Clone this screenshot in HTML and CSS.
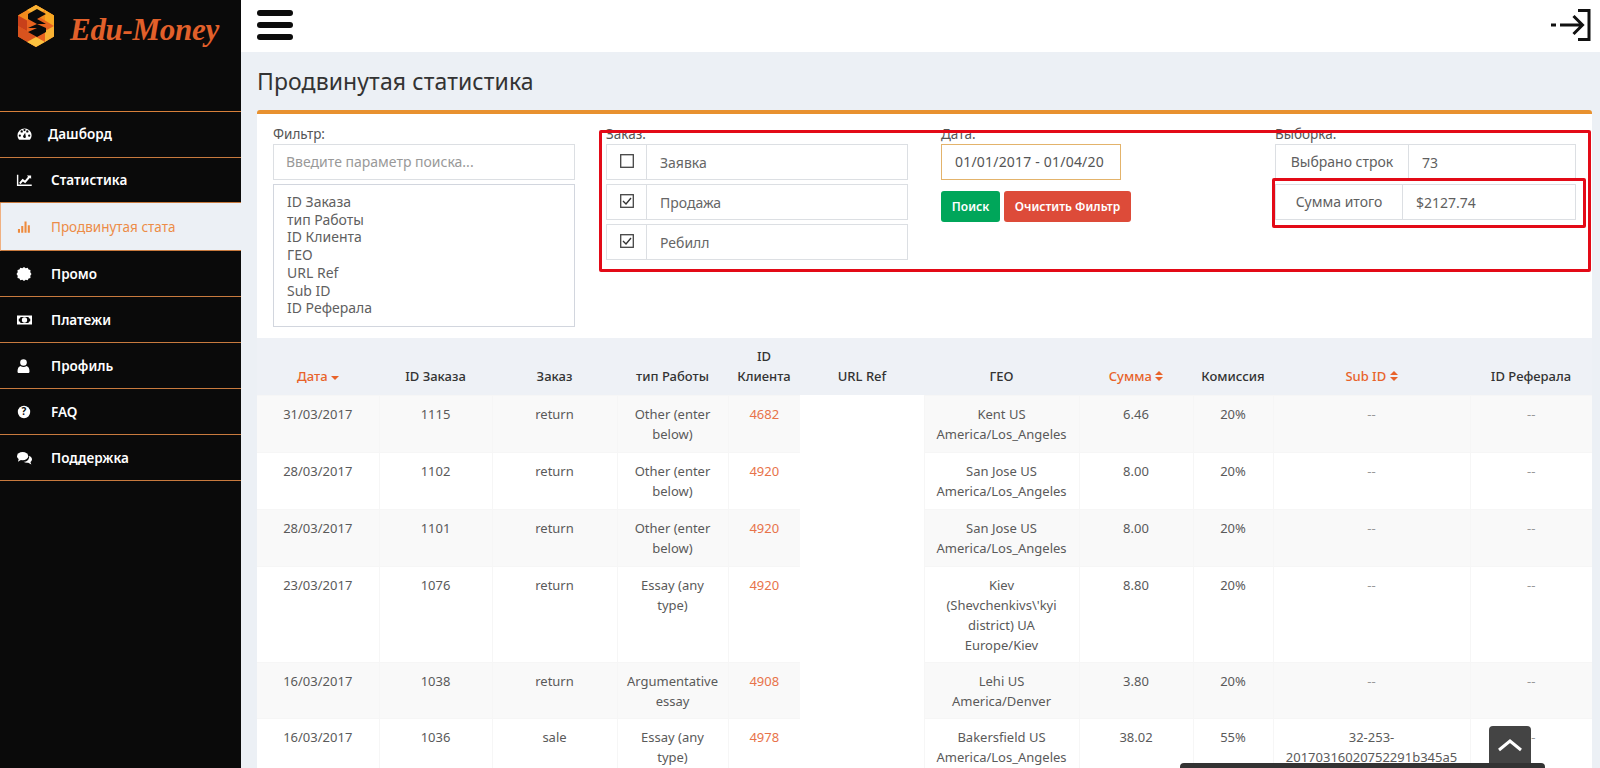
FILE: index.html
```html
<!DOCTYPE html>
<html lang="ru">
<head>
<meta charset="utf-8">
<title>Продвинутая статистика</title>
<link rel="stylesheet" href="styles.css">
</head>
<body>
<aside class="sidebar">
  <div class="logo">
    <svg class="logo-mark" viewBox="0 0 38 44" width="38" height="44">
      <polygon points="19,1 37,11.500 37,32.500 19,43 1,32.500 1,11.500" fill="#e8631f"/>
      <polygon points="19,1 37,11.500 28,16.500 19,11 10,16.500 1,11.500" fill="#f08a1d"/>
      <polygon points="19,1 28,6 19,11 10,6" fill="#f9b233"/>
      <polygon points="28,6 37,11.500 37,22 28,16.500" fill="#f7a823"/>
      <polygon points="1,11.500 10,16.500 10,27 1,22" fill="#c8401a"/>
      <polygon points="37,22 37,32.500 28,38 28,27" fill="#f9b233"/>
      <polygon points="1,22 10,27 19,33 19,43 1,32.500" fill="#d9531e"/>
      <polygon points="19,33 28,38 19,43 10,38" fill="#fbc13f"/>
      <polygon points="11,10 20,5 29,10 20,15 29,20 20,20 11,15" fill="#0a0a0a"/>
      <polygon points="11,24 20,20 29,24 29,28 20,33 11,28 20,24" fill="#0a0a0a"/>
    </svg>
    <span class="logo-text">Edu-Money</span>
  </div>
  <nav class="nav">
    <a class="nav-item tight">
      <svg class="ico" viewBox="0 0 16 14"><path d="M8 1a7.500 7.500 0 0 0-7.500 7.500c0 1.600.5 3 1.300 4.200.2.200.4.300.7.300h11c.3 0 .5-.1.7-.3A7.500 7.500 0 0 0 8 1zm-5 9a1.200 1.200 0 1 1 0-2.400 1.200 1.200 0 0 1 0 2.400zm2-4.500A1.200 1.200 0 1 1 5 3a1.200 1.200 0 0 1 0 2.500zM8 4a1.200 1.200 0 1 1 0-2.400A1.200 1.200 0 0 1 8 4zm1.500 6.500a1.700 1.700 0 0 1-3-1.500l2.200-3.300.8 4.800zM11 5.500A1.200 1.200 0 1 1 11 3a1.200 1.200 0 0 1 0 2.500zM13 10a1.200 1.200 0 1 1 0-2.400 1.200 1.200 0 0 1 0 2.400z" fill="#fff" fill-rule="evenodd"/></svg>
      Дашборд
    </a>
    <a class="nav-item short">
      <svg class="ico" viewBox="0 0 17 14"><path d="M.7 1v12h16" fill="none" stroke="#fff" stroke-width="1.600"/><path d="M2.500 10l3.800-4.500 2.700 2 3.500-4.200-1.300-1.300H16v3.800l-1.300-1.300-5.400 6.300L6.700 8.800l-2.800 3z" fill="#fff"/></svg>
      Статистика
    </a>
    <a class="nav-item active">
      <svg class="ico" viewBox="0 0 16 14"><path d="M1 9h2.200v4H1zM4.500 6h2.200v7H4.500zM8 1h2.200v12H8zM11.500 5h2.200v8h-2.200z" fill="#ee8a3c"/></svg>
      Продвинутая стата
    </a>
    <a class="nav-item">
      <svg class="ico" viewBox="0 0 14 14"><path d="M6.500 0l1.700 1.300 2-.6.9 1.900 1.900.5-.2 2.100L14 7l-1.200 1.800.2 2.100-1.900.5-.9 1.900-2-.6L6.500 14l-1.700-1.300-2 .6-.9-1.900-1.900-.5.2-2.100L-1 7 .2 5.200 0 3.100l1.900-.5.9-1.900 2 .6z" fill="#fff"/></svg>
      Промо
    </a>
    <a class="nav-item">
      <svg class="ico" viewBox="0 0 17 12"><path fill-rule="evenodd" d="M0 1h17v10H0zM2 4.500v3A2 2 0 0 1 4 9.500h9a2 2 0 0 1 2-2v-3a2 2 0 0 1-2-2H4a2 2 0 0 1-2 2zM8.500 3a3 3 0 1 0 0 6 3 3 0 0 0 0-6z" fill="#fff"/></svg>
      Платежи
    </a>
    <a class="nav-item">
      <svg class="ico" viewBox="0 0 14 14"><circle cx="6" cy="3.500" r="3.300" fill="#fff"/><path d="M0 12.500c0-3 1-5 3-5.500 1.800 1.300 4.200 1.300 6 0 2 .5 3 2.500 3 5.500 0 1-.7 1.500-1.500 1.500h-9C.7 14 0 13.500 0 12.500z" fill="#fff"/></svg>
      Профиль
    </a>
    <a class="nav-item">
      <svg class="ico" viewBox="0 0 14 14"><circle cx="6.500" cy="7" r="6.200" fill="#fff"/><text x="6.500" y="10.300" class="ico-q">?</text></svg>
      FAQ
    </a>
    <a class="nav-item">
      <svg class="ico" viewBox="0 0 16 14"><ellipse cx="6" cy="5" rx="6" ry="4.300" fill="#fff"/><path d="M2 7.500L1 11l4-2.500z" fill="#fff"/><path d="M13 4.500c1.800.8 3 2.200 3 3.800 0 1.200-.7 2.200-1.700 3l1 2.500-3.300-1.800c-2 .3-3.800-.1-5-1 3.500 0 6.300-2.300 6-6.500z" fill="#fff"/></svg>
      Поддержка
    </a>
  </nav>
</aside>

<main class="main">
  <header class="topbar">
    <div class="burger"><span></span><span></span><span></span></div>
    <svg class="logout" viewBox="0 0 40 32" width="40" height="32">
      <path d="M0 16h5" stroke="#111" stroke-width="3" fill="none"/>
      <path d="M9 16h22M22.500 7l9 9-9 9" stroke="#111" stroke-width="3" fill="none"/>
      <path d="M27 1.500h11v29H27" stroke="#111" stroke-width="3" fill="none"/>
    </svg>
  </header>

  <h1 class="title">Продвинутая статистика</h1>

  <section class="panel">
    <div class="col">
      <label class="lbl">Фильтр:</label>
      <div class="field placeholder">Введите параметр поиска...</div>
      <ul class="list">
        <li>ID Заказа</li><li>тип Работы</li><li>ID Клиента</li><li>ГЕО</li><li>URL Ref</li><li>Sub ID</li><li>ID Реферала</li>
      </ul>
    </div>
    <div class="col">
      <label class="lbl">Заказ:</label>
      <div class="group">
        <span class="addon"><svg class="check" viewBox="0 0 14 14"><rect x=".7" y=".7" width="12.600" height="12.600" fill="#fff" stroke="#444" stroke-width="1.300"/></svg></span>
        <span class="group-text">Заявка</span>
      </div>
      <div class="group">
        <span class="addon"><svg class="check" viewBox="0 0 14 14"><rect x=".7" y=".7" width="12.600" height="12.600" fill="#fff" stroke="#444" stroke-width="1.300"/><path d="M3 7l3 3 5-6" fill="none" stroke="#333" stroke-width="1.400"/></svg></span>
        <span class="group-text">Продажа</span>
      </div>
      <div class="group">
        <span class="addon"><svg class="check" viewBox="0 0 14 14"><rect x=".7" y=".7" width="12.600" height="12.600" fill="#fff" stroke="#444" stroke-width="1.300"/><path d="M3 7l3 3 5-6" fill="none" stroke="#333" stroke-width="1.400"/></svg></span>
        <span class="group-text">Ребилл</span>
      </div>
    </div>
    <div class="col">
      <label class="lbl">Дата:</label>
      <div class="field date">01/01/2017 - 01/04/20</div>
      <div class="buttons">
        <button class="btn green">Поиск</button>
        <button class="btn red">Очистить Фильтр</button>
      </div>
    </div>
    <div class="col">
      <label class="lbl">Выборка:</label>
      <div class="group stat">
        <span class="stat-key wide">Выбрано строк</span>
        <span class="stat-val">73</span>
      </div>
      <div class="group stat">
        <span class="stat-key">Сумма итого</span>
        <span class="stat-val">$2127.74</span>
      </div>
    </div>
    <div class="mark mark-outer"></div>
    <div class="mark mark-inner"></div>
  </section>

  <table class="data">
    <colgroup>
      <col class="c1"><col class="c2"><col class="c3"><col class="c4"><col class="c5"><col class="c6"><col class="c7"><col class="c8"><col class="c9"><col class="c10"><col class="c11">
    </colgroup>
    <thead>
      <tr>
        <th class="sort">Дата <svg class="sort-ico" viewBox="0 0 8 12"><path d="M0 6h8L4 10z"/></svg></th>
        <th>ID Заказа</th>
        <th>Заказ</th>
        <th>тип Работы</th>
        <th>ID Клиента</th>
        <th>URL Ref</th>
        <th>ГЕО</th>
        <th class="sort">Сумма <svg class="sort-ico" viewBox="0 0 8 12"><path d="M0 5l4-4 4 4zM0 7h8l-4 4z"/></svg></th>
        <th>Комиссия</th>
        <th class="sort">Sub ID <svg class="sort-ico" viewBox="0 0 8 12"><path d="M0 5l4-4 4 4zM0 7h8l-4 4z"/></svg></th>
        <th>ID Реферала</th>
      </tr>
    </thead>
    <tbody>
      <tr>
        <td>31/03/2017</td><td>1115</td><td>return</td><td>Other (enter below)</td><td class="link">4682</td>
        <td class="blank" rowspan="6"></td>
        <td>Kent US America/Los_Angeles</td><td>6.46</td><td>20%</td><td class="dash">--</td><td class="dash">--</td>
      </tr>
      <tr>
        <td>28/03/2017</td><td>1102</td><td>return</td><td>Other (enter below)</td><td class="link">4920</td>
        <td>San Jose US America/Los_Angeles</td><td>8.00</td><td>20%</td><td class="dash">--</td><td class="dash">--</td>
      </tr>
      <tr>
        <td>28/03/2017</td><td>1101</td><td>return</td><td>Other (enter below)</td><td class="link">4920</td>
        <td>San Jose US America/Los_Angeles</td><td>8.00</td><td>20%</td><td class="dash">--</td><td class="dash">--</td>
      </tr>
      <tr class="snug">
        <td>23/03/2017</td><td>1076</td><td>return</td><td>Essay (any type)</td><td class="link">4920</td>
        <td>Kiev (Shevchenkivs\'kyi district) UA Europe/Kiev</td><td>8.80</td><td>20%</td><td class="dash">--</td><td class="dash">--</td>
      </tr>
      <tr class="snug">
        <td>16/03/2017</td><td>1038</td><td>return</td><td>Argumentative essay</td><td class="link">4908</td>
        <td>Lehi US America/Denver</td><td>3.80</td><td>20%</td><td class="dash">--</td><td class="dash">--</td>
      </tr>
      <tr>
        <td>16/03/2017</td><td>1036</td><td>sale</td><td>Essay (any type)</td><td class="link">4978</td>
        <td>Bakersfield US America/Los_Angeles</td><td>38.02</td><td>55%</td><td>32-253-20170316020752291b345a5</td><td class="dash">--</td>
      </tr>
    </tbody>
  </table>
</main>

<a class="to-top">
  <svg viewBox="0 0 26 14" width="26" height="14"><path d="M2 12L13 3l11 9" fill="none" stroke="#fff" stroke-width="3"/></svg>
</a>
<div class="dock"></div>
</body>
</html>
```

FILE: styles.css
```css
* { box-sizing: border-box; }
html, body { margin: 0; height: 768px; overflow: hidden; }
body {
  display: flex;
  font-family: "Noto Sans", "Open Sans", sans-serif;
  font-size: 14px;
  color: #555;
  background: #ecf0f5;
}

.sidebar { width: 241px; flex: none; height: 768px; background: #0a0a0a; }
.logo { height: 112px; padding: 4px 0 0 17px; display: flex; align-items: flex-start; gap: 15px; border-bottom: 1px solid #d8803a; }
.logo-text {
  font-family: "Liberation Serif", serif;
  font-style: italic;
  font-weight: 700;
  font-size: 31px;
  line-height: 42px;
  margin-top: 5px;
  color: #e2602a;
  letter-spacing: -.3px;
}
.nav-item {
  height: 46px;
  display: flex;
  align-items: center;
  padding-left: 17px;
  gap: 19px;
  color: #fff;
  font-weight: 600;
  font-size: 13.5px;
  border-bottom: 1px solid #c87a3e;
}
.nav-item.tight { gap: 16px; padding-bottom: 2px; }
.nav-item.short { height: 45px; }
.nav-item.active {
  height: 48px;
  background: #ecf0f5;
  color: #ec8c47;
  font-weight: 400;
  border-left: 1px solid #f0b080;
  padding-left: 16px;
}
.ico { width: 15px; height: 14px; flex: none; overflow: visible; }
.ico-q { font-size: 10px; font-weight: 700; text-anchor: middle; fill: #0a0a0a; font-family: "Noto Sans", sans-serif; }

.main { flex: 1; min-width: 0; padding: 0 8px 0 16px; position: relative; }
.topbar {
  height: 52px;
  margin: 0 -8px 0 -16px;
  padding: 9px 9px 0 16px;
  background: #fff;
  display: flex;
  justify-content: space-between;
  align-items: flex-start;
}
.burger { width: 36px; display: flex; flex-direction: column; gap: 6px; padding-top: 1px; }
.burger span { height: 6px; background: #0c0c0c; border-radius: 3px; }
.title { margin: 0; height: 58px; padding-top: 13px; font-size: 23px; line-height: 32px; font-weight: 400; color: #333; letter-spacing: .1px; }

.panel {
  position: relative;
  height: 228px;
  background: #fff;
  border-top: 4px solid #e8912f;
  border-radius: 3px 3px 0 0;
  padding: 12px 16px 0;
  display: grid;
  grid-template-columns: 333px 335px 334px 301px;
}
.lbl { display: block; height: 18px; line-height: 17px; font-size: 13.5px; color: #555; }
.field { width: 302px; height: 36px; border: 1px solid #dcdfe3; padding: 0 12px; line-height: 34px; font-size: 14px; }
.placeholder { color: #999; }
.list { margin: 4px 0 0; padding: 8px 13px; list-style: none; width: 302px; height: 143px; border: 1px solid #d2d6de; }
.list li { line-height: 17.7px; font-size: 14px; color: #5f5f5f; }
.group { width: 302px; height: 36px; display: flex; border: 1px solid #dcdfe3; margin-bottom: 4px; }
.addon { width: 40px; flex: none; border-right: 1px solid #dcdfe3; display: flex; align-items: center; justify-content: center; }
.check { width: 14px; height: 14px; margin-top: -3px; }
.group-text { padding-left: 13px; line-height: 35px; font-size: 14px; color: #666; }
.date { width: 180px; border-color: #e3b36b; padding: 0 13px; color: #555; letter-spacing: .2px; white-space: nowrap; overflow: hidden; }
.buttons { display: flex; gap: 4px; margin-top: 11px; }
.btn { height: 31px; border: 0; border-radius: 3px; color: #fff; font-family: inherit; font-size: 12px; font-weight: 600; padding: 0; }
.btn.green { width: 59px; background: #00a65a; }
.btn.red { width: 127px; background: #dd4b39; }
.stat { width: 301px; }
.stat-key { width: 127px; flex: none; text-align: center; line-height: 34px; border-right: 1px solid #dcdfe3; font-size: 14px; color: #5f5f5f; }
.stat-key.wide { width: 133px; }
.stat-val { padding-left: 13px; line-height: 35px; font-size: 14px; color: #5f5f5f; }
.mark { position: absolute; border: 3px solid #e30a17; border-radius: 2px; pointer-events: none; }
.mark-outer { left: 342px; top: 16px; width: 992px; height: 142px; }
.mark-inner { left: 1015px; top: 64px; width: 314px; height: 50px; }

.data { width: 1335px; table-layout: fixed; border-collapse: collapse; font-size: 13px; line-height: 20px; text-align: center; }
.c1 { width: 122px; } .c2 { width: 113px; } .c3 { width: 125px; } .c4 { width: 111px; } .c5 { width: 72px; } .c6 { width: 124px; }
.c7 { width: 155px; } .c8 { width: 114px; } .c9 { width: 80px; } .c10 { width: 197px; } .c11 { width: 122px; }
.data th { height: 57px; padding: 6px 8px 9px; font-weight: 500; color: #333; vertical-align: bottom; background: #eef1f6; }
.data th.sort { color: #e8632a; }
.sort-ico { width: 8px; height: 12px; vertical-align: -1px; fill: #e8632a; }
.data td { padding: 8px; vertical-align: top; color: #5a5a5a; background: #fff; border-left: 1px solid #f6f6f6; border-top: 1px solid #f6f6f6; word-break: normal; overflow-wrap: anywhere; }
.data tr.snug td { padding-bottom: 7px; }
.data tbody tr:nth-child(odd) td { background: #f9f9f9; }
.data td:first-child { border-left: 0; }
.data td.blank, .data tbody tr:nth-child(odd) td.blank { background: #fff; border: 0; }
.data td.link { color: #e8734a; }
.data td.dash { color: #999; }

.to-top { position: fixed; left: 1489px; top: 726px; width: 42px; height: 42px; background: #444; border-radius: 4px 4px 0 0; display: flex; justify-content: center; padding-top: 12px; }
.dock { position: fixed; left: 1180px; top: 763px; width: 365px; height: 5px; background: #333; border-radius: 4px 4px 0 0; }
```
